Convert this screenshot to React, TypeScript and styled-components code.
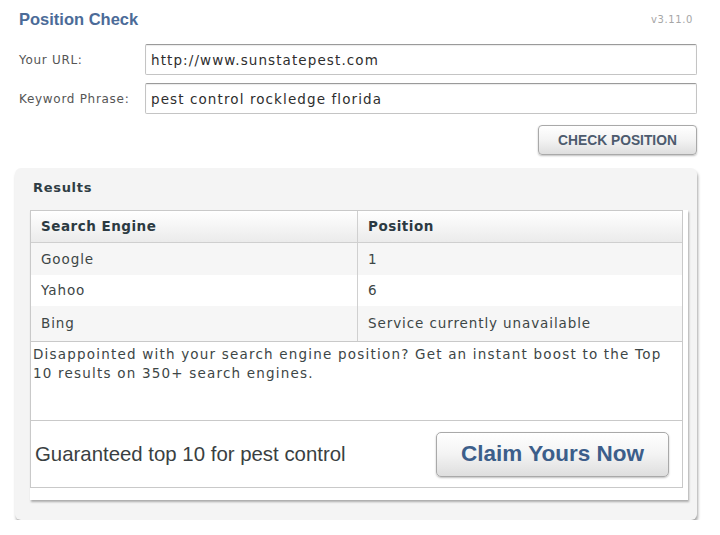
import React from "react";
import styled, { createGlobalStyle } from "styled-components";

const Global = createGlobalStyle`
  html, body { margin: 0; padding: 0; background: #ffffff; }
  * { box-sizing: border-box; }
`;

const Page = styled.div`
  width: 720px;
  padding: 0 23px 0 15px;
  font-family: "DejaVu Sans", Verdana, sans-serif;
`;

const Header = styled.div`
  height: 38px;
  display: flex;
  align-items: center;
  justify-content: space-between;
  padding: 0 4px 0 4px;
`;

const Title = styled.h1`
  margin: 0;
  font-family: "Liberation Sans", Arial, sans-serif;
  font-weight: bold;
  font-size: 16.5px;
  color: #4b6b98;
`;

const Version = styled.span`
  font-family: "DejaVu Sans", Verdana, sans-serif;
  font-size: 10px;
  letter-spacing: 0.6px;
  color: #a6a6a6;
`;

const Form = styled.div`
  display: flex;
  flex-direction: column;
  gap: 8px;
  margin-top: 6px;
`;

const Row = styled.div`
  display: flex;
  align-items: center;
`;

const Label = styled.label`
  width: 130px;
  padding-left: 4px;
  font-family: "DejaVu Sans", Verdana, sans-serif;
  font-size: 12px;
  letter-spacing: 0.7px;
  color: #555;
`;

const Input = styled.input`
  width: 552px;
  height: 31px;
  border: 1px solid #c4c4c4;
  border-top-color: #9a9a9a;
  border-radius: 2px;
  padding: 0 5px;
  font-family: "DejaVu Sans", Verdana, sans-serif;
  font-size: 13.5px;
  letter-spacing: 1.1px;
  color: #2e2e2e;
  background: #fff;
  box-shadow: inset 0 1px 1px rgba(0, 0, 0, 0.08);
  outline: none;
`;

const ButtonRow = styled.div`
  display: flex;
  justify-content: flex-end;
  margin-top: 11px;
`;

const Button = styled.button<{ $big?: boolean }>`
  width: ${(p) => (p.$big ? "233px" : "159px")};
  height: ${(p) => (p.$big ? "45px" : "30px")};
  border: 1px solid #a9a9a9;
  border-radius: ${(p) => (p.$big ? "5px" : "4px")};
  background: linear-gradient(#ffffff 0%, #f3f3f3 50%, #dedede 100%);
  box-shadow: 0 1px 2px rgba(0, 0, 0, 0.25);
  font-family: "Liberation Sans", Arial, sans-serif;
  font-weight: bold;
  font-size: ${(p) => (p.$big ? "22.5px" : "13.8px")};
  color: ${(p) => (p.$big ? "#3c5e8a" : "#4d5b6e")};
  padding: 0;
  cursor: pointer;
`;

const Panel = styled.div`
  margin-top: 13px;
  width: 682px;
  height: 352px;
  background: #f4f4f4;
  border-radius: 6px;
  box-shadow: 1px 3px 3px rgba(0, 0, 0, 0.35);
  padding: 0 9px 0 15px;
  display: flex;
  flex-direction: column;
`;

const PanelTitle = styled.div`
  height: 42px;
  display: flex;
  align-items: center;
  padding-left: 3px;
  padding-bottom: 3px;
  font-family: "DejaVu Sans", Verdana, sans-serif;
  font-weight: bold;
  font-size: 13px;
  letter-spacing: 0.7px;
  color: #2f3d44;
`;

const Sheet = styled.div`
  background: #ffffff;
  padding: 0 5px 12px 0;
  box-shadow: 1px 2px 2px rgba(0, 0, 0, 0.3);
`;

const Box = styled.div`
  border: 1px solid #c9c9c9;
  display: flex;
  flex-direction: column;
`;

const Table = styled.div`
  display: flex;
  flex-direction: column;
`;

const TRow = styled.div<{ $head?: boolean; $shade?: boolean; $h: number }>`
  display: grid;
  grid-template-columns: 326px 1fr;
  height: ${(p) => p.$h}px;
  background: ${(p) =>
    p.$head
      ? "linear-gradient(#ffffff, #ebebeb)"
      : p.$shade
      ? "#f6f6f6"
      : "#ffffff"};
  border-bottom: ${(p) => (p.$head ? "1px solid #cfcfcf" : "none")};
`;

const Cell = styled.div<{ $head?: boolean; $last?: boolean }>`
  display: flex;
  align-items: center;
  padding-left: 10px;
  padding-bottom: 1px;
  border-left: ${(p) => (p.$last ? "1px solid #d0d0d0" : "none")};
  font-family: "DejaVu Sans", Verdana, sans-serif;
  font-size: 13.5px;
  letter-spacing: ${(p) => (p.$head ? "0.5px" : "0.9px")};
  font-weight: ${(p) => (p.$head ? "bold" : "normal")};
  color: ${(p) => (p.$head ? "#2c3a42" : "#3d4646")};
`;

const Message = styled.div`
  height: 79px;
  border-top: 1px solid #c9c9c9;
  padding: 3px 3px 0 2px;
  font-family: "DejaVu Sans", Verdana, sans-serif;
  font-size: 13.5px;
  letter-spacing: 1.2px;
  line-height: 19px;
  color: #3d4646;
`;

const Cta = styled.div`
  height: 67px;
  border-top: 1px solid #c9c9c9;
  display: flex;
  align-items: center;
  justify-content: space-between;
  padding: 0 13px 0 4px;
`;

const CtaText = styled.span`
  font-family: "Liberation Sans", Arial, sans-serif;
  font-size: 20.4px;
  color: #3a3f42;
`;

const rows = [
  { engine: "Google", pos: "1", shade: true, h: 32 },
  { engine: "Yahoo", pos: "6", shade: false, h: 31 },
  { engine: "Bing", pos: "Service currently unavailable", shade: true, h: 35 },
];

export default function App() {
  return (
    <>
      <Global />
      <Page>
        <Header>
          <Title>Position Check</Title>
          <Version>v3.11.0</Version>
        </Header>
        <Form>
          <Row>
            <Label>Your URL:</Label>
            <Input defaultValue="http://www.sunstatepest.com" />
          </Row>
          <Row>
            <Label>Keyword Phrase:</Label>
            <Input defaultValue="pest control rockledge florida" />
          </Row>
        </Form>
        <ButtonRow>
          <Button>CHECK POSITION</Button>
        </ButtonRow>
        <Panel>
          <PanelTitle>Results</PanelTitle>
          <Sheet>
            <Box>
              <Table>
                <TRow $head $h={32}>
                  <Cell $head>Search Engine</Cell>
                  <Cell $head $last>
                    Position
                  </Cell>
                </TRow>
                {rows.map((r) => (
                  <TRow key={r.engine} $shade={r.shade} $h={r.h}>
                    <Cell>{r.engine}</Cell>
                    <Cell $last>{r.pos}</Cell>
                  </TRow>
                ))}
              </Table>
              <Message>
                Disappointed with your search engine position? Get an instant boost to the Top 10
                results on 350+ search engines.
              </Message>
              <Cta>
                <CtaText>Guaranteed top 10 for pest control</CtaText>
                <Button $big>Claim Yours Now</Button>
              </Cta>
            </Box>
          </Sheet>
        </Panel>
      </Page>
    </>
  );
}
